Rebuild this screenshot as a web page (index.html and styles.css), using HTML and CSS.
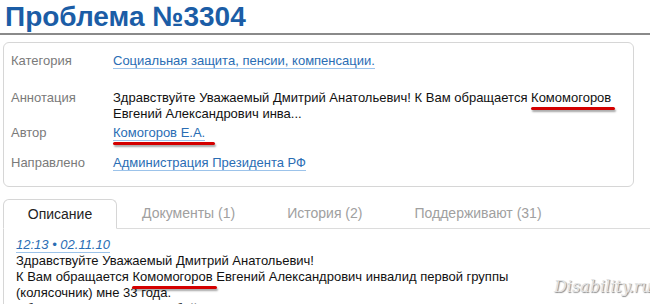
FILE: index.html
```html
<!DOCTYPE html>
<html lang="ru">
<head>
  <meta charset="UTF-8">
  <meta name="viewport" content="width=device-width, initial-scale=1.0">
  <title>Проблема №3304</title>
  <link rel="stylesheet" href="styles.css">
</head>
<body>
  <h1 class="title">Проблема №3304</h1>
  <div class="card">
    <div class="row">
      <span class="label">Категория</span>
      <span class="value"><a href="#">Социальная защита, пенсии, компенсации.</a></span>
    </div>
    <div class="row row-note">
      <span class="label">Аннотация</span>
      <span class="value">Здравствуйте Уважаемый Дмитрий Анатольевич! К Вам обращается <span class="mark">Комомогоров</span> Евгений Александрович инва...</span>
    </div>
    <div class="row row-author">
      <span class="label">Автор</span>
      <span class="value"><a href="#" class="mark mark-long">Комогоров Е.А.</a></span>
    </div>
    <div class="row row-sent">
      <span class="label">Направлено</span>
      <span class="value"><a href="#">Администрация Президента РФ</a></span>
    </div>
  </div>
  <div class="tabs">
    <span class="tab active">Описание</span>
    <span class="tab">Документы (1)</span>
    <span class="tab">История (2)</span>
    <span class="tab">Поддерживают (31)</span>
  </div>
  <div class="desc">
    <a href="#" class="date">12:13 • 02.11.10</a>
    <p>Здравствуйте Уважаемый Дмитрий Анатольевич!<br>
    К Вам обращается <span class="mark">Комомогоров</span> Евгений Александрович инвалид первой группы<br>
    (колясочник) мне 33 года.<br>
    Обращаюсь к Вам с просьбой помочь мне в решении жилищного вопроса</p>
    <span class="watermark">Disability.ru</span>
  </div>
</body>
</html>
```

FILE: styles.css
```css
:root {
  font-family: "Liberation Sans", Arial, sans-serif;
}
*, ::before, ::after {
  box-sizing: border-box;
}
body {
  margin: 0;
  width: 650px;
  height: 304px;
  overflow: hidden;
  background: #fff;
  color: #111;
  font-size: 13px;
}
a {
  color: #2a6db4;
  text-decoration: none;
  border-bottom: 1px solid #9cc3ea;
}
.title {
  margin: 0;
  padding: 2px 0 0 5px;
  height: 35px;
  font-size: 28px;
  line-height: 30px;
  color: #1b5da6;
  border-bottom: 2px solid #8a8a8a;
}
.card {
  margin: 7px 16px 0 3px;
  padding: 10px 0 15px 7px;
  border: 1px solid #d6d6d6;
  border-radius: 6px;
}
.row {
  display: grid;
  grid-template-columns: 102px 1fr;
  line-height: 16px;
}
.row-note {
  margin-top: 21px;
}
.row-author {
  margin-top: 3px;
}
.row-sent {
  margin-top: 14px;
}
.label {
  color: #7a7a7a;
}
.value {
  color: #111;
}
.mark {
  position: relative;
}
.mark::after {
  content: "";
  position: absolute;
  left: 0;
  right: -4px;
  bottom: -5px;
  height: 3px;
  border-radius: 2px;
  background: #d40000;
  box-shadow: 1px 2px 2px rgba(0, 0, 0, .35);
}
.mark-long::after {
  right: -10px;
}
.tabs {
  display: flex;
  margin: 12px 0 0 3px;
  height: 30px;
  border-bottom: 1px solid #dcdcdc;
}
.tab {
  padding: 6px 0 0;
  font-size: 14px;
  color: #a0a0a0;
}
.tab:nth-child(2) { margin-left: 25px; }
.tab:nth-child(3) { margin-left: 52px; }
.tab:nth-child(4) { margin-left: 52px; }
.tab.active {
  width: 114px;
  margin-bottom: -1px;
  text-align: center;
  color: #222;
  background: #fff;
  border: 1px solid #d6d6d6;
  border-bottom-color: #fff;
  border-radius: 6px 6px 0 0;
}
.desc {
  position: relative;
  margin-left: 3px;
  padding: 8px 0 0 12px;
  border-left: 1px solid #d6d6d6;
  height: 80px;
}
.date {
  font-style: italic;
  line-height: 15px;
}
.desc p {
  margin: 1px 0 0;
  line-height: 16px;
}
.watermark {
  position: absolute;
  left: 550px;
  top: 48px;
  font-family: "DejaVu Serif", serif;
  font-style: italic;
  font-size: 16px;
  color: #e4e4e4;
  text-shadow: 1px 1px 1px #8a8a8a;
}
```
